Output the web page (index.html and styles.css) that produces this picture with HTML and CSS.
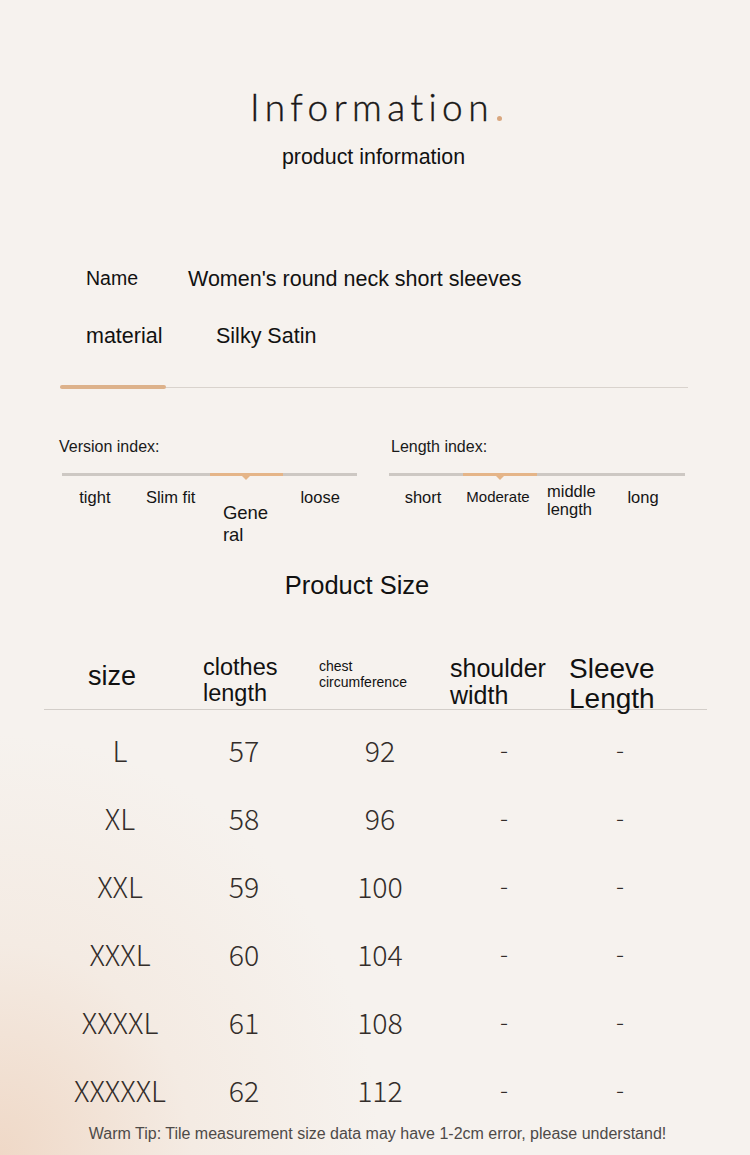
FILE: index.html
```html
<!DOCTYPE html>
<html lang="en">
<head>
<meta charset="utf-8">
<title>Information</title>
<link rel="stylesheet" href="styles.css">
</head>
<body>
<main class="page">
  <header class="head">
    <h1 class="title">Information<span class="dot"></span></h1>
    <p class="subtitle">product information</p>
  </header>

  <section class="info">
    <div class="info-row row-name">
      <span class="info-label">Name</span>
      <span class="info-value">Women's round neck short sleeves</span>
    </div>
    <div class="info-row row-material">
      <span class="info-label">material</span>
      <span class="info-value">Silky Satin</span>
    </div>
  </section>

  <div class="divider"><span class="divider-accent"></span></div>

  <section class="indexes">
    <div class="index index-version">
      <div class="index-title">Version index:</div>
      <div class="scale">
        <span class="seg"></span><span class="seg"></span><span class="seg active"></span><span class="seg"></span>
      </div>
      <div class="scale-labels">
        <span class="lab lab-tight">tight</span>
        <span class="lab lab-slim">Slim fit</span>
        <span class="lab lab-general"><span class="general-text">General</span></span>
        <span class="lab">loose</span>
      </div>
    </div>
    <div class="index index-length">
      <div class="index-title">Length index:</div>
      <div class="scale">
        <span class="seg"></span><span class="seg active"></span><span class="seg"></span><span class="seg"></span>
      </div>
      <div class="scale-labels">
        <span class="lab lab-short">short</span>
        <span class="lab lab-small">Moderate</span>
        <span class="lab lab-two">middle<br>length</span>
        <span class="lab lab-long">long</span>
      </div>
    </div>
  </section>

  <h2 class="size-title">Product Size</h2>

  <section class="table">
    <div class="thead">
      <span class="th th-size">size</span>
      <span class="th th-length">clothes<br>length</span>
      <span class="th th-chest">chest<br>circumference</span>
      <span class="th th-shoulder">shoulder<br>width</span>
      <span class="th th-sleeve">Sleeve<br>Length</span>
    </div>
    <div class="tbody">
      <div class="tr"><span>L</span><span>57</span><span>92</span><span class="dash">-</span><span class="dash">-</span></div>
      <div class="tr"><span>XL</span><span>58</span><span>96</span><span class="dash">-</span><span class="dash">-</span></div>
      <div class="tr"><span>XXL</span><span>59</span><span>100</span><span class="dash">-</span><span class="dash">-</span></div>
      <div class="tr"><span>XXXL</span><span>60</span><span>104</span><span class="dash">-</span><span class="dash">-</span></div>
      <div class="tr"><span>XXXXL</span><span>61</span><span>108</span><span class="dash">-</span><span class="dash">-</span></div>
      <div class="tr"><span>XXXXXL</span><span>62</span><span>112</span><span class="dash">-</span><span class="dash">-</span></div>
    </div>
  </section>

  <p class="tip">Warm Tip: Tile measurement size data may have 1-2cm error, please understand!</p>
</main>
</body>
</html>
```

FILE: styles.css
```css
* { box-sizing: border-box; }

html, body {
  margin: 0;
  padding: 0;
}

body {
  width: 750px;
  height: 1155px;
  overflow: hidden;
  font-family: "Liberation Sans", Arial, sans-serif;
  color: #111;
  background-color: #f6f2ee;
  background-image:
    radial-gradient(ellipse 380px 420px at 0% 100%, rgba(238, 212, 192, 0.85) 0%, rgba(241, 224, 210, 0.4) 50%, rgba(246, 242, 238, 0) 100%);
}

.page {
  width: 750px;
  height: 1155px;
  padding-top: 87px;
}

/* ---------- heading ---------- */
.head {
  text-align: center;
}

.title {
  margin: 0;
  font-family: "Lato", "Open Sans", sans-serif;
  font-weight: 300;
  font-size: 37px;
  line-height: 40px;
  letter-spacing: 5.4px;
  color: #1a1817;
  display: flex;
  justify-content: center;
  align-items: baseline;
  padding-left: 2px;
  -webkit-text-stroke: 0.4px #1a1817;
}

.dot {
  display: inline-block;
  width: 5px;
  height: 5px;
  border-radius: 50%;
  background: #d9a77f;
  margin-left: 3px;
}

.subtitle {
  margin: 18px 0 0;
  font-size: 21.4px;
  line-height: 24px;
  color: #111;
  padding-right: 3px;
}

/* ---------- info ---------- */
.info {
  margin-top: 98px;
  padding-left: 86px;
}

.info-row {
  display: flex;
  align-items: center;
  height: 24px;
  font-size: 21.5px;
  line-height: 24px;
}

.row-name .info-label {
  width: 102px;
  font-size: 19.5px;
  margin-top: -3px;
}

.row-material {
  margin-top: 33px;
}

.row-material .info-label {
  width: 130px;
}

/* ---------- divider ---------- */
.divider {
  margin: 37px 62px 0 60px;
  height: 4px;
  display: flex;
  align-items: center;
  background: linear-gradient(#d9d3cd, #d9d3cd) 0 50% / 100% 1px no-repeat;
}

.divider-accent {
  width: 106px;
  height: 4px;
  border-radius: 2px;
  background: #ddb28b;
}

/* ---------- indexes ---------- */
.indexes {
  display: flex;
  gap: 32px;
  padding-left: 59px;
  margin-top: 48px;
}

.index-version { width: 298px; }
.index-length { width: 296px; }

.index-title {
  font-size: 16px;
  line-height: 20px;
  color: #1a1a1a;
}

.index-length .index-title { padding-left: 2px; }

.scale {
  display: flex;
  height: 3px;
  margin-top: 16px;
}

.index-version .scale { margin-left: 3px; width: 295px; }
.index-length .scale { width: 296px; }

.seg {
  flex: 1;
  background: #cdc8c3;
  position: relative;
}

.seg.active {
  background: #e5b588;
}

.seg.active::after {
  content: "";
  position: absolute;
  left: 50%;
  top: 3px;
  margin-left: -4px;
  border-left: 4px solid transparent;
  border-right: 4px solid transparent;
  border-top: 4px solid #e5b588;
}

.scale-labels {
  display: grid;
  grid-template-columns: repeat(4, 1fr);
  margin-top: 11px;
  font-size: 16.5px;
  line-height: 20px;
  color: #151515;
  text-align: center;
}

.index-version .scale-labels { margin-left: 3px; width: 295px; }
.index-length .scale-labels { width: 296px; }

.lab-tight { padding-right: 8px; }
.lab-slim { padding-right: 4px; }
.lab-short { padding-right: 6px; }
.lab-long { padding-right: 10px; }

.lab-small { font-size: 15px; padding-right: 4px; }

.lab-two {
  line-height: 18px;
  margin-top: -5px;
  text-align: left;
  padding-left: 10px;
}

.lab-general {
  display: flex;
  justify-content: center;
  padding-left: 3px;
}

.general-text {
  width: 50px;
  font-size: 18.5px;
  line-height: 22px;
  margin-top: 15px;
  text-align: left;
  word-break: break-all;
}

/* ---------- product size ---------- */
.size-title {
  margin: 24px 0 0;
  padding-right: 36px;
  font-size: 25.5px;
  font-weight: 400;
  line-height: 30px;
  text-align: center;
  color: #111;
}

.table {
  margin: 51px 43px 0 44px;
}

.thead {
  display: grid;
  grid-template-columns: 115px 116px 131px 119px 1fr;
  align-items: start;
  padding-left: 44px;
  height: 59px;
  border-bottom: 1px solid #d3cec9;
  color: #111;
}

.th { display: block; }

.th-size {
  font-size: 27px;
  line-height: 30px;
  margin-top: 10px;
}

.th-length {
  font-size: 23.5px;
  line-height: 26px;
  margin-top: 3px;
}

.th-chest {
  font-size: 14px;
  line-height: 16px;
  margin-top: 7px;
}

.th-shoulder {
  font-size: 25px;
  line-height: 27px;
  margin-top: 4px;
}

.th-sleeve {
  font-size: 28px;
  line-height: 30px;
  margin-top: 3px;
}

.tbody {
  margin-top: 6px;
}

.tr {
  display: grid;
  grid-template-columns: 152px 96px 176px 72px 160px;
  height: 68px;
  align-items: center;
  text-align: center;
  font-family: "Noto Sans CJK SC", "Noto Sans", sans-serif;
  font-weight: 300;
  font-size: 28.5px;
  line-height: 34px;
  color: #332d2a;
}

.tr .dash {
  font-size: 24px;
  margin-top: -3px;
}

/* ---------- tip ---------- */
.tip {
  margin: 1px 0 0;
  text-align: center;
  font-size: 16px;
  line-height: 18px;
  color: #4e4a48;
  padding-left: 5px;
}
```
